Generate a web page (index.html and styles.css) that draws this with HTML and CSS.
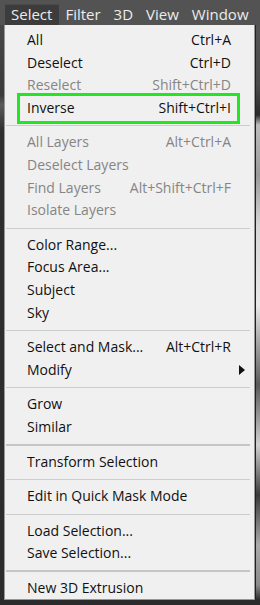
FILE: index.html
```html
<!DOCTYPE html>
<html>
	<head>
		<meta charset="UTF-8">
		<title>Select</title>
		<link rel="stylesheet" href="styles.css">
	</head>
	<body>
		<div class="menubar">
			<span class="top active">Select</span>
			<span class="top">Filter</span>
			<span class="top">3D</span>
			<span class="top">View</span>
			<span class="top">Window</span>
		</div>
		<div class="workspace">
			<div class="gutter"></div>
			<ul class="menu">
				<li class="item"><span>All</span><span class="key">Ctrl+A</span></li>
				<li class="item"><span>Deselect</span><span class="key">Ctrl+D</span></li>
				<li class="item off"><span>Reselect</span><span class="key">Shift+Ctrl+D</span></li>
				<li class="item mark"><span>Inverse</span><span class="key">Shift+Ctrl+I</span></li>
				<li class="sep"></li>
				<li class="item off"><span>All Layers</span><span class="key">Alt+Ctrl+A</span></li>
				<li class="item off"><span>Deselect Layers</span></li>
				<li class="item off"><span>Find Layers</span><span class="key">Alt+Shift+Ctrl+F</span></li>
				<li class="item off"><span>Isolate Layers</span></li>
				<li class="sep"></li>
				<li class="item"><span>Color Range...</span></li>
				<li class="item"><span>Focus Area...</span></li>
				<li class="item"><span>Subject</span></li>
				<li class="item"><span>Sky</span></li>
				<li class="sep"></li>
				<li class="item"><span>Select and Mask...</span><span class="key">Alt+Ctrl+R</span></li>
				<li class="item sub"><span>Modify</span></li>
				<li class="sep"></li>
				<li class="item"><span>Grow</span></li>
				<li class="item"><span>Similar</span></li>
				<li class="sep thick"></li>
				<li class="item"><span>Transform Selection</span></li>
				<li class="sep"></li>
				<li class="item"><span>Edit in Quick Mask Mode</span></li>
				<li class="sep"></li>
				<li class="item"><span>Load Selection...</span></li>
				<li class="item"><span>Save Selection...</span></li>
				<li class="sep thick"></li>
				<li class="item"><span>New 3D Extrusion</span></li>
			</ul>
			<div class="canvas"></div>
		</div>
	</body>
</html>
```

FILE: styles.css
```css
html,
body {
	margin: 0;
	padding: 0;
}

body {
	width: 260px;
	height: 605px;
	overflow: hidden;
	background: #2b2b2b;
	font-family: "Open Sans", "Noto Sans", sans-serif;
}

ul,
li {
	margin: 0;
	padding: 0;
	list-style: none;
}

.menubar {
	display: flex;
	height: 25px;
	padding-left: 5px;
	background: #535353;
	box-sizing: border-box;
	padding-top: 4px;
}

.top {
	padding: 0 7px 0 6px;
	font-size: 15px;
	line-height: 21px;
	color: #ececec;
}

.active {
	background: #3c3c3c;
	box-shadow: inset 0 1px 0 #4a4a4a;
}

.workspace {
	display: flex;
	height: 580px;
}

.gutter {
	width: 4px;
	background: linear-gradient(#474747 0, #3a3a3a 70px, #5a5a5a 80px, #2f2f2f 105px, #2b2b2b 100%);
}

.menu {
	width: 251px;
	height: 575px;
	box-sizing: border-box;
	padding: 4px 0 0;
	background: #f0f0f0;
	border: 1px solid #979797;
	border-top: 0;
}

.item {
	position: relative;
	display: flex;
	justify-content: space-between;
	height: 22.6px;
	padding: 0 23px 0 22px;
	font-size: 14px;
	line-height: 22.6px;
	color: #111;
	white-space: nowrap;
}

.off {
	color: #858585;
}

.sub::after {
	content: "";
	position: absolute;
	right: 9px;
	top: 6px;
	border-left: 6px solid #111;
	border-top: 5px solid transparent;
	border-bottom: 5px solid transparent;
}

.mark::before {
	content: "";
	position: absolute;
	left: 12px;
	right: 14px;
	top: -4px;
	bottom: -5px;
	border: 3px solid #22e622;
}

.sep {
	height: 1px;
	margin: 6px 4px 5px 1px;
	background: #cdcdcd;
}

.thick {
	height: 2px;
	margin: 5px 4px 5px 1px;
	background: #c6c6c6;
}

.canvas {
	flex: 1;
	height: 575px;
	border-left: 1px solid #222;
	background: linear-gradient(#555 0, #4a4a4a 60px, #2a2a2a 90px, #bdbdbd 100px, #9a9a9a 150px, #d6d6d6 200px, #e8e8e8 280px, #5a5a5a 360px, #d0d0d0 420px, #3a3a3a 470px, #aaa 520px, #8a8a8a 560px, #2b2b2b 575px);
}
```
